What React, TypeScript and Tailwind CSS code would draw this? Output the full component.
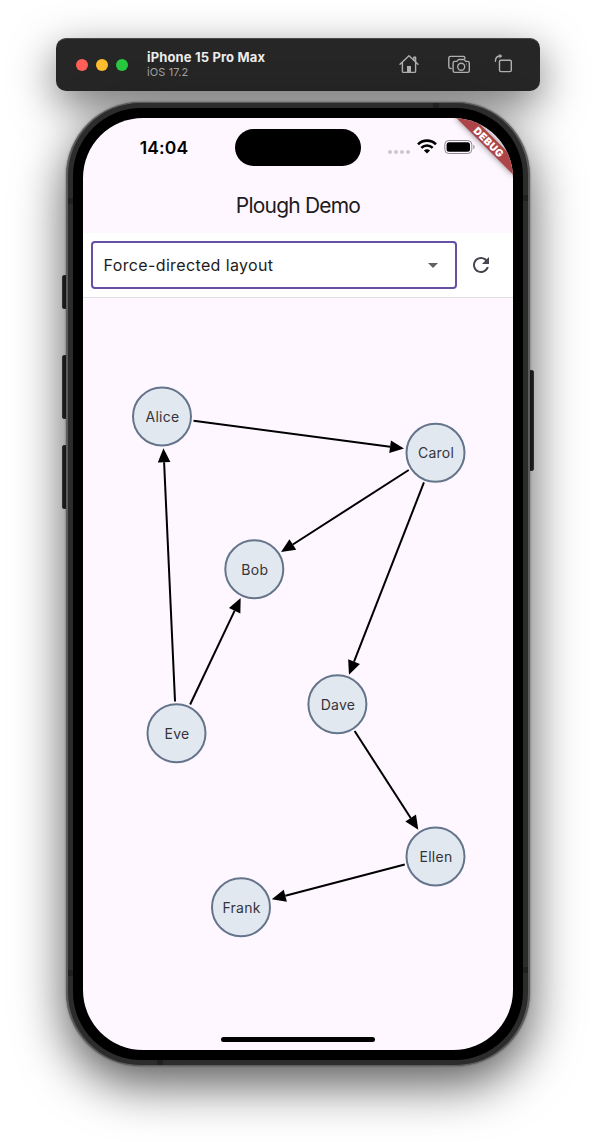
import React from "react";

type Person = { name: string; x: number; y: number };

const people: Person[] = [
  { name: "Alice", x: 79, y: 118.5 },
  { name: "Carol", x: 352.5, y: 154.8 },
  { name: "Bob", x: 171.3, y: 271.3 },
  { name: "Eve", x: 93.5, y: 435.2 },
  { name: "Dave", x: 254.4, y: 406.3 },
  { name: "Ellen", x: 352.5, y: 558.5 },
  { name: "Frank", x: 158, y: 609.3 },
];

const links: [string, string][] = [
  ["Alice", "Carol"],
  ["Carol", "Bob"],
  ["Carol", "Dave"],
  ["Eve", "Alice"],
  ["Eve", "Bob"],
  ["Dave", "Ellen"],
  ["Ellen", "Frank"],
];

const NODE_GAP = 31.8;
const HEAD_LENGTH = 14;
const HEAD_HALF_WIDTH = 6.3;

function Arrow({ from, to }: { from: Person; to: Person }) {
  const dx = to.x - from.x;
  const dy = to.y - from.y;
  const length = Math.hypot(dx, dy);
  const ux = dx / length;
  const uy = dy / length;
  const tipX = to.x - ux * NODE_GAP;
  const tipY = to.y - uy * NODE_GAP;
  const baseX = tipX - ux * HEAD_LENGTH;
  const baseY = tipY - uy * HEAD_LENGTH;
  const wx = -uy * HEAD_HALF_WIDTH;
  const wy = ux * HEAD_HALF_WIDTH;
  return (
    <g>
      <line
        x1={from.x + ux * NODE_GAP}
        y1={from.y + uy * NODE_GAP}
        x2={baseX}
        y2={baseY}
        stroke="#000"
        strokeWidth="2"
      />
      <polygon
        points={`${tipX},${tipY} ${baseX + wx},${baseY + wy} ${baseX - wx},${baseY - wy}`}
      />
    </g>
  );
}

function Graph() {
  const find = (name: string) => people.find((p) => p.name === name)!;
  return (
    <div className="relative flex-1">
      <svg className="absolute inset-0 h-full w-full">
        {links.map(([a, b]) => (
          <Arrow key={a + b} from={find(a)} to={find(b)} />
        ))}
        {people.map((p) => (
          <circle key={p.name} cx={p.x} cy={p.y} r="29" fill="#e2e8f0" stroke="#64748b" strokeWidth="2" />
        ))}
      </svg>
      {people.map((p) => (
        <div
          key={p.name}
          className="absolute flex size-[60px] -translate-x-1/2 -translate-y-1/2 items-center justify-center rounded-full pt-px pl-px text-sm tracking-[0.25px] text-[#36343a]"
          style={{ left: p.x, top: p.y }}
        >
          {p.name}
        </div>
      ))}
    </div>
  );
}

function TitleBar() {
  return (
    <header className="flex h-[53px] w-[484px] shrink-0 items-center rounded-[10px] border-t border-[#4a4a4a] bg-[#262626] pl-5 shadow-[0_14px_44px_rgba(0,0,0,0.55)]">
      <div className="flex gap-2">
        <span className="size-3 rounded-full bg-[#ff5f57]" />
        <span className="size-3 rounded-full bg-[#febc2e]" />
        <span className="size-3 rounded-full bg-[#28c840]" />
      </div>
      <div className="ml-[19px] flex-1 pb-[2px]">
        <div className="text-[13px] leading-[15px] font-bold tracking-[0.15px] text-[#ececec]">iPhone 15 Pro Max</div>
        <div className="text-[11px] leading-[14px] tracking-[0.1px] text-[#a3a3a3]">iOS 17.2</div>
      </div>
      <div className="flex pr-[26px] pb-[3px] text-[#b0b0b0]">
        <svg width="20" height="20" viewBox="0 0 20 20" fill="none" stroke="currentColor" strokeWidth="1.4" strokeLinecap="round" strokeLinejoin="round">
          <path d="M1 10.2 10 1.8l9 8.4M3.4 8.8v8.4c0 .8.4 1.2 1.2 1.2h10.8c.8 0 1.2-.4 1.2-1.2V8.8" />
          <path d="M14.8 5.9V3.3h1.8v4.3" />
          <path d="M8 18v-6h4v6z" fill="currentColor" stroke="none" />
        </svg>
        <svg className="ml-[29px]" width="22" height="20" viewBox="0 0 22 20" fill="none" stroke="currentColor" strokeWidth="1.4" strokeLinecap="round" strokeLinejoin="round">
          <path d="M3.2 14.5h-.7c-1.1 0-1.7-.6-1.7-1.7V4.1c0-1.1.6-1.7 1.7-1.7h12.7c1.1 0 1.7.6 1.7 1.7v.5" />
          <path d="M6.8 7.4h2.1l1.2-1.5c.2-.3.5-.4.9-.4h4.6c.4 0 .7.1.9.4l1.2 1.5h1.9c1.1 0 1.7.6 1.7 1.7v7.6c0 1.1-.6 1.7-1.7 1.7H6.8c-1.1 0-1.7-.6-1.7-1.7V9.1c0-1.1.6-1.7 1.7-1.7z" />
          <circle cx="13.2" cy="12.7" r="3.5" />
          <circle cx="18.5" cy="10" r=".5" fill="currentColor" stroke="none" />
        </svg>
        <svg className="ml-[24px]" width="20" height="20" viewBox="0 0 20 20" fill="none" stroke="currentColor" strokeWidth="1.4" strokeLinecap="round" strokeLinejoin="round">
          <rect x="5.5" y="6.2" width="11.8" height="11.4" rx="1.4" />
          <path d="M1.4 7.2c0-3 1.4-5.2 4.8-5.2" />
          <path d="M5.6.3 8.2 2.1 5.6 4z" fill="currentColor" strokeWidth=".4" />
        </svg>
      </div>
    </header>
  );
}

function StatusBar() {
  return (
    <div className="flex h-[59px] shrink-0 items-start">
      <div className="w-[152px] pt-[19px] pl-[10px] text-center text-[17.5px] leading-[22px] font-semibold tracking-[0.1px] text-black">14:04</div>
      <div className="mt-[11px] h-[37px] w-[126px] rounded-full bg-black" />
      <div className="ml-[27px] flex gap-[2px] pt-[32px]">
        {[0, 1, 2, 3].map((i) => (
          <span key={i} className="size-1 rounded-full bg-[#cdc8cf]" />
        ))}
      </div>
      <svg className="mt-[21px] ml-[7px]" width="20" height="15" viewBox="0 0 19 14" fill="none" stroke="#000" strokeWidth="2.5">
        <path d="M1 5C5.7.3 13.3.3 18 5" />
        <path d="M4.1 8.3c3.1-3 7.7-3 10.8 0" />
        <path d="M6.6 10.8c1.6-1.5 4.2-1.5 5.8 0L9.5 13.7z" fill="#000" stroke="none" />
      </svg>
      <svg className="mt-[22px] ml-[7px]" width="32" height="14" viewBox="0 0 32 14">
        <rect x=".8" y=".5" width="27" height="13" rx="4" fill="none" stroke="#8d898e" strokeWidth="1" />
        <rect x="2.6" y="2.2" width="23.4" height="9.6" rx="2.5" fill="#000" />
        <path d="M29.4 4.8c1.6.5 1.6 3.9 0 4.4z" fill="#8d898e" />
      </svg>
    </div>
  );
}

function Toolbar() {
  return (
    <div className="flex h-[65px] shrink-0 items-center border-b border-[#e1dfe5] bg-white px-2">
      <div className="flex h-12 w-[366px] items-center justify-between rounded border-2 border-[#6750a4] pr-[10px] pl-[10.5px]">
        <span className="text-base tracking-[0.37px] text-[#1d1b20]">Force-directed layout</span>
        <svg width="24" height="24" viewBox="0 0 24 24" fill="#616161">
          <path d="M7 10l5 5 5-5z" />
        </svg>
      </div>
      <div className="flex size-12 items-center justify-center">
        <svg width="24" height="24" viewBox="0 0 24 24" fill="#49454f">
          <path d="M17.65 6.35C16.2 4.9 14.21 4 12 4c-4.42 0-7.99 3.58-7.99 8s3.57 8 7.99 8c3.73 0 6.84-2.55 7.73-6h-2.08c-.82 2.33-3.04 4-5.65 4-3.31 0-6-2.69-6-6s2.69-6 6-6c1.66 0 3.14.69 4.22 1.78L13 11h7V4l-2.35 2.35z" />
        </svg>
      </div>
    </div>
  );
}

function Phone() {
  return (
    <div className="relative mt-[11px] h-[964px] w-[464px] shrink-0">
      <span className="absolute top-[173px] -left-1 h-[34px] w-[6px] rounded-l-[2px] border border-[#414141] bg-[#292929]" />
      <span className="absolute top-[253px] -left-1 h-[64px] w-[6px] rounded-l-[2px] border border-[#414141] bg-[#292929]" />
      <span className="absolute top-[343px] -left-1 h-[64px] w-[6px] rounded-l-[2px] border border-[#414141] bg-[#292929]" />
      <span className="absolute top-[268px] -right-1 h-[101px] w-[6px] rounded-r-[2px] border border-[#414141] bg-[#292929]" />
      <div className="relative h-full rounded-[74px] border-x-2 border-y border-[#5c5c5c] bg-[#2c2c2c] p-[5px] shadow-[0_18px_50px_rgba(0,0,0,0.66),0_0_2px_rgba(0,0,0,0.5)]">
        <span className="absolute top-[95px] left-0 h-[6px] w-[5px] bg-[#202020]" />
        <span className="absolute top-[92px] right-0 h-[6px] w-[5px] bg-[#202020]" />
        <span className="absolute top-0 left-[365px] h-[5px] w-[6px] bg-[#202020]" />
        <span className="absolute bottom-[89px] left-0 h-[6px] w-[5px] bg-[#202020]" />
        <span className="absolute right-0 bottom-[92px] h-[6px] w-[5px] bg-[#202020]" />
        <span className="absolute bottom-0 left-[89px] h-[5px] w-[6px] bg-[#202020]" />
        <div className="h-full rounded-[68px] bg-black p-[10px]">
          <div className="relative flex h-full flex-col overflow-hidden rounded-[60px] bg-[#fef7ff]">
            <StatusBar />
            <h1 className="flex h-14 shrink-0 items-center justify-center pt-[2px] text-[21px] tracking-[-0.8px] text-[#1d1b20]">
              Plough Demo
            </h1>
            <Toolbar />
            <Graph />
            <div className="absolute bottom-2 left-1/2 h-[5px] w-[154px] -translate-x-1/2 rounded-full bg-black" />
            <div className="absolute top-[18px] -right-[16px] flex h-3 w-20 rotate-45 items-center justify-center bg-[#ad4548] text-[10.2px] leading-none font-black tracking-[0.5px] text-white shadow-[0_0_6px_rgba(0,0,0,0.5)]">
              DEBUG
            </div>
          </div>
        </div>
      </div>
    </div>
  );
}

export default function App() {
  return (
    <main className="flex h-[1142px] w-[596px] flex-col items-center overflow-hidden bg-white pt-[38px] font-['Inter','Liberation_Sans',sans-serif]">
      <TitleBar />
      <Phone />
    </main>
  );
}
